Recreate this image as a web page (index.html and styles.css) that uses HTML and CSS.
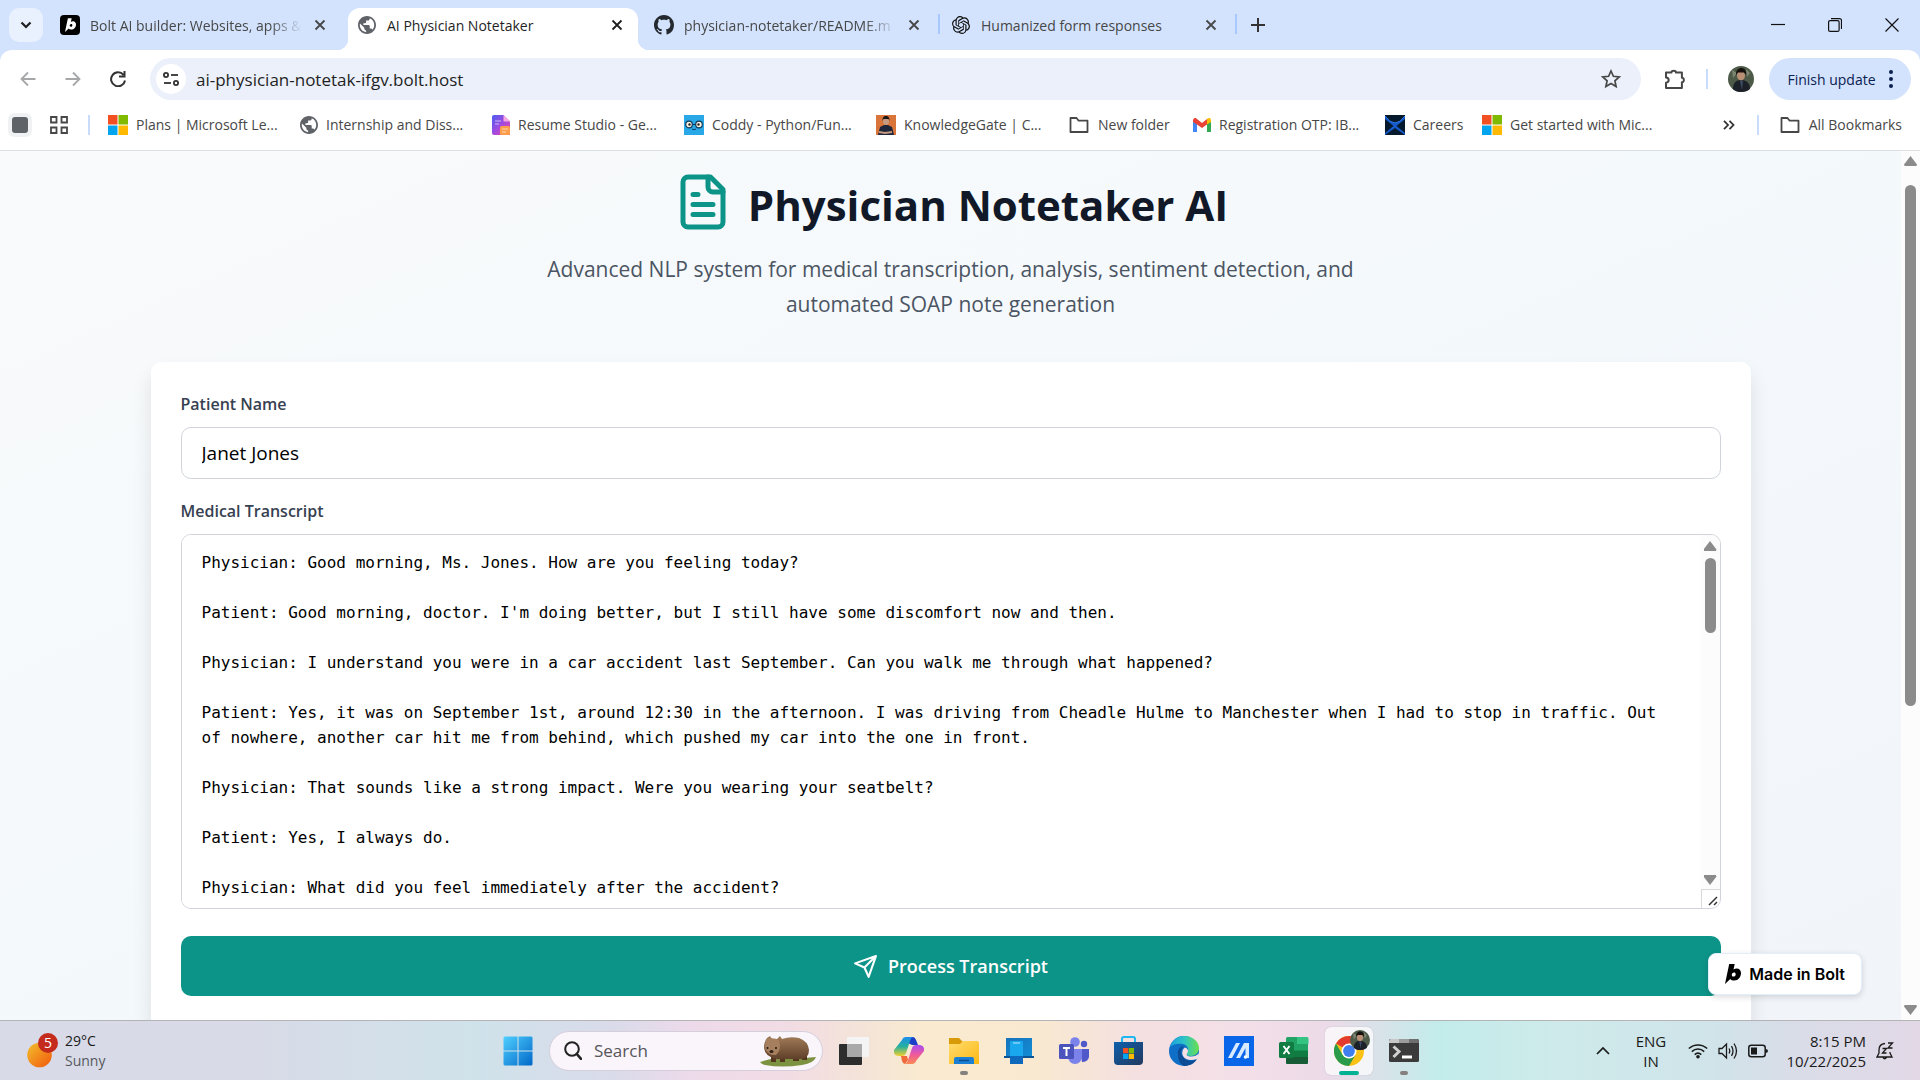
FILE: index.html
```html
<!DOCTYPE html>
<html lang="en">
<head>
<meta charset="utf-8">
<title>AI Physician Notetaker</title>
<link rel="stylesheet" href="styles.css">
</head>
<body>
<svg class="defs" aria-hidden="true">
  <defs>
    <linearGradient id="gWin" x1="0" y1="0" x2="1" y2="1"><stop offset="0" stop-color="#4fd0ff"/><stop offset="1" stop-color="#0067c8"/></linearGradient>
    <linearGradient id="gSun" x1="0" y1="0" x2="1" y2="1"><stop offset="0" stop-color="#f2c12e"/><stop offset="1" stop-color="#f2560a"/></linearGradient>
    <linearGradient id="gCopA" x1="0" y1="0" x2="0" y2="1"><stop offset="0" stop-color="#1a8df0"/><stop offset=".5" stop-color="#26b09c"/><stop offset="1" stop-color="#f2d02c"/></linearGradient>
    <linearGradient id="gCopB" x1="0" y1="0" x2="0" y2="1"><stop offset="0" stop-color="#a84df0"/><stop offset=".5" stop-color="#ee5a9c"/><stop offset="1" stop-color="#fb8a50"/></linearGradient>
    <linearGradient id="gFold" x1="0" y1="0" x2="1" y2="1"><stop offset="0" stop-color="#ffdc70"/><stop offset="1" stop-color="#fdb913"/></linearGradient>
    <linearGradient id="gBlue" x1="0" y1="0" x2="1" y2="1"><stop offset="0" stop-color="#1673bd"/><stop offset="1" stop-color="#128ed6"/></linearGradient>
    <linearGradient id="gStore" x1="0" y1="0" x2="1" y2="1"><stop offset="0" stop-color="#0f60ac"/><stop offset="1" stop-color="#22385f"/></linearGradient>
    <linearGradient id="gEdgeA" x1="0" y1="0" x2="1" y2="0"><stop offset="0" stop-color="#1c9fe0"/><stop offset=".5" stop-color="#2ec3c4"/><stop offset="1" stop-color="#6be04c"/></linearGradient>
    <linearGradient id="gRes" x1="0" y1="0" x2="1" y2="1"><stop offset="0" stop-color="#4a5cf0"/><stop offset=".5" stop-color="#a24be0"/><stop offset="1" stop-color="#f2469a"/></linearGradient>
    <linearGradient id="gFur" x1="0" y1="0" x2="0" y2="1"><stop offset="0" stop-color="#a27c59"/><stop offset="1" stop-color="#5f4029"/></linearGradient>
    <symbol id="globe" viewBox="2 2 20 20"><path fill="#5f6368" d="M12 2C6.480 2 2 6.480 2 12s4.480 10 10 10 10-4.480 10-10S17.520 2 12 2zm-1 17.930c-3.950-.49-7-3.850-7-7.930 0-.62.080-1.210.210-1.790L9 15v1c0 1.100.9 2 2 2v1.930zm6.900-2.540c-.26-.81-1-1.390-1.900-1.390h-1v-3c0-.55-.45-1-1-1H8v-2h2c.55 0 1-.45 1-1V7h2c1.100 0 2-.9 2-2v-.41c2.930 1.190 5 4.060 5 7.410 0 2.080-.8 3.970-2.100 5.390z"/></symbol>
    <symbol id="ms" viewBox="0 0 20 20"><path d="M0 0h9.500v9.500H0z" fill="#f25022"/><path d="M10.500 0H20v9.500h-9.500z" fill="#7fba00"/><path d="M0 10.500h9.500V20H0z" fill="#00a4ef"/><path d="M10.500 10.500H20V20h-9.500z" fill="#ffb900"/></symbol>
    <symbol id="folder" viewBox="0 0 20 20"><path d="M1.500 3h6l2.200 2.700h8.800v11.300h-17z" fill="none" stroke="#474747" stroke-width="1.800" stroke-linejoin="round"/></symbol>
    <symbol id="x" viewBox="0 0 12 12"><path d="M1.500 1.500l9 9M10.500 1.500l-9 9" fill="none" stroke="currentColor" stroke-width="1.800"/></symbol>
    <symbol id="bolt" viewBox="0 0 16 20"><path fill="currentColor" fill-rule="evenodd" d="M4.200 0h5.500L8.500 5.500c1-.8 2-1.100 3.200-1.100 2.600 0 4.300 1.900 4.300 4.700 0 4-2.800 7.500-6.700 7.500-1.800 0-3.200-.7-4-1.600L0 20zM9 8.600c-1.300 0-2.200 1.100-2.200 2.300 0 1 .7 1.700 1.600 1.700 1.300 0 2.300-1.100 2.300-2.400 0-.9-.7-1.600-1.700-1.600z"/></symbol>
    <symbol id="face" viewBox="0 0 26 26"><circle cx="13" cy="13" r="13" fill="#4e5a48"/><path d="M4 4l5 3-4 5zM18 3l4 4-3 4z" fill="#7d8672"/><path d="M5 23c0-6 3-9 8-9s9 3 9 9c-2 2-5 3-9 3s-6-1-8-3z" fill="#1c2028"/><ellipse cx="13" cy="9.500" rx="4" ry="5" fill="#b98f76"/><path d="M8 9c0-5 2-7 5.500-7S18.500 5 18 9l-2-2.500H10z" fill="#14110f"/><path d="M12 15h3l-1 9z" fill="#3b4a66"/></symbol>
  </defs>
</svg>

<header class="browser">
  <div class="tabstrip">
    <button class="tab-search" aria-label="Search tabs"><svg width="12" height="8" viewBox="0 0 12 8"><path d="M1.500 1.500L6 6l4.500-4.500" fill="none" stroke="#1f1f1f" stroke-width="2.200"/></svg></button>
    <div class="tabs">
      <div class="tab">
        <span class="fav fav-bolt"><svg width="11" height="14"><use href="#bolt"/></svg></span>
        <span class="tab-title fade">Bolt AI builder: Websites, apps &amp;</span>
        <button class="close" aria-label="Close tab"><svg width="12" height="12"><use href="#x"/></svg></button>
      </div>
      <div class="tab active">
        <span class="fav"><svg width="18" height="18"><use href="#globe"/></svg></span>
        <span class="tab-title">AI Physician Notetaker</span>
        <button class="close" aria-label="Close tab"><svg width="12" height="12"><use href="#x"/></svg></button>
      </div>
      <div class="tab ruled">
        <span class="fav"><svg width="20" height="20" viewBox="0 0 16 16"><path fill="#24292f" d="M8 0C3.580 0 0 3.580 0 8c0 3.540 2.290 6.530 5.470 7.590.4.070.55-.17.55-.38 0-.19-.01-.82-.01-1.490-2.010.37-2.530-.49-2.690-.94-.09-.23-.48-.94-.82-1.130-.28-.15-.68-.52-.01-.53.63-.01 1.080.58 1.230.82.72 1.210 1.870.87 2.330.66.070-.52.28-.87.51-1.070-1.780-.2-3.640-.89-3.640-3.950 0-.87.31-1.590.82-2.150-.08-.2-.36-1.020.08-2.120 0 0 .67-.21 2.200.82.640-.18 1.320-.27 2-.27s1.360.09 2 .27c1.530-1.040 2.200-.82 2.200-.82.440 1.100.16 1.920.08 2.120.51.56.82 1.270.82 2.150 0 3.070-1.870 3.750-3.650 3.950.29.25.54.73.54 1.480 0 1.070-.01 1.930-.01 2.200 0 .21.150.46.55.38A8.010 8.010 0 0 0 16 8c0-4.420-3.580-8-8-8z"/></svg></span>
        <span class="tab-title fade">physician-notetaker/README.m</span>
        <button class="close" aria-label="Close tab"><svg width="12" height="12"><use href="#x"/></svg></button>
      </div>
      <div class="tab ruled">
        <span class="fav"><svg width="18" height="18" viewBox="0 0 24 24"><path fill="#111" d="M22.280 9.820a5.980 5.980 0 0 0-.52-4.910 6.050 6.050 0 0 0-6.510-2.900A6.070 6.070 0 0 0 4.980 4.180a5.980 5.980 0 0 0-4 2.900 6.050 6.050 0 0 0 .74 7.100 5.980 5.980 0 0 0 .51 4.910 6.050 6.050 0 0 0 6.510 2.900A5.980 5.980 0 0 0 13.260 24a6.060 6.060 0 0 0 5.770-4.210 5.990 5.990 0 0 0 4-2.900 6.060 6.060 0 0 0-.75-7.070zm-9.020 12.610a4.480 4.480 0 0 1-2.880-1.040l.14-.08 4.780-2.760a.79.79 0 0 0 .39-.68v-6.740l2.020 1.170a.07.07 0 0 1 .04.05v5.580a4.500 4.500 0 0 1-4.490 4.500zM3.600 18.300a4.470 4.470 0 0 1-.53-3.010l.14.08 4.780 2.760a.77.77 0 0 0 .78 0l5.840-3.370v2.330a.08.08 0 0 1-.03.06l-4.830 2.790A4.500 4.500 0 0 1 3.600 18.300zM2.340 7.900a4.490 4.490 0 0 1 2.370-1.970v5.680a.77.77 0 0 0 .39.670l5.810 3.360-2.020 1.170a.08.08 0 0 1-.07 0l-4.830-2.790A4.500 4.500 0 0 1 2.340 7.870zm16.600 3.860L13.100 8.360l2.020-1.160a.08.08 0 0 1 .07 0l4.830 2.790a4.490 4.490 0 0 1-.68 8.100v-5.670a.79.79 0 0 0-.4-.670zm2.010-3.020l-.14-.09-4.770-2.780a.78.78 0 0 0-.79 0L9.410 9.230V6.900a.07.07 0 0 1 .03-.06l4.830-2.790a4.500 4.500 0 0 1 6.680 4.660zM8.310 12.860l-2.020-1.160a.08.08 0 0 1-.04-.06V6.070a4.500 4.500 0 0 1 7.380-3.450l-.14.08-4.780 2.760a.79.79 0 0 0-.39.680zm1.100-2.370l2.600-1.500 2.610 1.500v3l-2.600 1.500-2.610-1.500z"/></svg></span>
        <span class="tab-title">Humanized form responses</span>
        <button class="close" aria-label="Close tab"><svg width="12" height="12"><use href="#x"/></svg></button>
      </div>
    </div>
    <button class="new-tab" aria-label="New tab"><svg width="14" height="14" viewBox="0 0 14 14"><path d="M7 0v14M0 7h14" stroke="#333" stroke-width="2"/></svg></button>
    <div class="window-controls">
      <button aria-label="Minimize"><svg width="14" height="14" viewBox="0 0 14 14"><path d="M0 6.500h14" stroke="#111" stroke-width="1.200"/></svg></button>
      <button aria-label="Restore"><svg width="14" height="14" viewBox="0 0 14 14"><rect x=".6" y="2.600" width="10.500" height="10.800" rx="1.500" fill="none" stroke="#111" stroke-width="1.200"/><path d="M3 .6h8.500a2 2 0 0 1 2 2v8.500" fill="none" stroke="#111" stroke-width="1.200"/></svg></button>
      <button aria-label="Close"><svg width="14" height="14" viewBox="0 0 14 14"><path d="M.5.5l13 13M13.500.5l-13 13" stroke="#111" stroke-width="1.200"/></svg></button>
    </div>
  </div>

  <div class="toolbar">
    <div class="nav">
      <button aria-label="Back"><svg width="16" height="16" viewBox="0 0 16 16"><path d="M15.500 8H1.500M8 1.500L1.500 8 8 14.500" fill="none" stroke="#a5a7a9" stroke-width="1.800"/></svg></button>
      <button aria-label="Forward"><svg width="16" height="16" viewBox="0 0 16 16"><path d="M.5 8h14M8 1.500L14.500 8 8 14.500" fill="none" stroke="#a5a7a9" stroke-width="1.800"/></svg></button>
      <button aria-label="Reload"><svg width="16" height="16" viewBox="0 0 16 16"><path d="M13.500 3.800A7 7 0 1 0 15 9.500M14.500 0v5.500H9" fill="none" stroke="#333" stroke-width="2"/></svg></button>
    </div>
    <div class="omnibox">
      <button class="site-info" aria-label="Site information"><svg width="16" height="14" viewBox="0 0 16 14"><g fill="none" stroke="#333" stroke-width="1.800"><circle cx="3" cy="3" r="2.100"/><path d="M8 3h7"/><circle cx="13" cy="11" r="2.100"/><path d="M1 11h7"/></g></svg></button>
      <input class="url" type="text" value="ai-physician-notetak-ifgv.bolt.host" aria-label="Address">
      <button class="star" aria-label="Bookmark this tab"><svg width="20" height="20" viewBox="0 0 20 20"><path d="M10 2l2.400 5.300 5.800.6-4.300 3.900 1.200 5.700L10 14.600l-5.100 2.900 1.200-5.700L1.800 7.900l5.800-.6z" fill="none" stroke="#474747" stroke-width="1.700"/></svg></button>
    </div>
    <button class="ext" aria-label="Extensions"><svg width="22" height="22" viewBox="0 0 22 22"><path d="M2 4.500h5.500c-.3-2.400 4.700-2.400 4.400 0h6v5.300c2.600-.2 2.600 4.600 0 4.400V20H2v-5.200c3.600-.4 3.600-5 0-5.300z" fill="none" stroke="#474747" stroke-width="2" stroke-linejoin="round"/></svg></button>
    <span class="rule"></span>
    <button class="profile" aria-label="Profile"><svg width="26" height="26"><use href="#face"/></svg></button>
    <button class="update">Finish update<svg width="4" height="18" viewBox="0 0 4 18"><g fill="#0a2050"><circle cx="2" cy="2" r="2"/><circle cx="2" cy="9" r="2"/><circle cx="2" cy="16" r="2"/></g></svg></button>
  </div>

  <nav class="bookmarks" aria-label="Bookmarks">
    <button class="saved-group" aria-label="Saved tab group"><span></span></button>
    <button class="apps" aria-label="Tab groups"><svg width="18" height="18" viewBox="0 0 18 18"><g fill="none" stroke="#474747" stroke-width="1.800"><path d="M1 1h5.500v5.500H1zM11.500 1H17v5.500h-5.500zM1 11.500h5.500V17H1zM11.500 11.500H17V17h-5.500z"/></g></svg></button>
    <span class="rule"></span>
    <div class="marks">
      <a href="#"><svg width="20" height="20"><use href="#ms"/></svg>Plans | Microsoft Le...</a>
      <a href="#"><svg width="18" height="18"><use href="#globe"/></svg>Internship and Diss...</a>
      <a href="#"><svg width="18" height="20" viewBox="0 0 18 20"><path d="M2 0h9.500L18 6.500V20H2a2 2 0 0 1-2-2V2a2 2 0 0 1 2-2z" fill="url(#gRes)"/><path d="M11.500 0L18 6.500h-6.500z" fill="#f7a8e0"/><rect x="8" y="11" width="10" height="9" rx="1.500" fill="#ff9d4a"/><path d="M3 6h6M3 9h4M10 14h6M10 17h4" stroke="#fff" stroke-opacity=".6"/></svg>Resume Studio - Ge...</a>
      <a href="#"><svg width="20" height="20" viewBox="0 0 20 20"><path d="M0 0h20v20H0z" fill="#28a8e6"/><g fill="#fff7e4" stroke="#113a5c" stroke-width="1.200"><circle cx="5" cy="9.500" r="3.300"/><circle cx="15" cy="9.500" r="3.300"/></g><path d="M8.300 9.500h3.400M8 14q2 1.500 4 0" fill="none" stroke="#113a5c"/><circle cx="5.500" cy="9.500" r="1.200" fill="#222"/><circle cx="14.500" cy="9.500" r="1.200" fill="#222"/></svg>Coddy - Python/Fun...</a>
      <a href="#"><svg width="20" height="20" viewBox="0 0 20 20"><path d="M0 0h20v20H0z" fill="#d9743a"/><path d="M2 20l2-8 4-2h4l4 2 2 8z" fill="#20263a"/><ellipse cx="10" cy="6" rx="3" ry="4" fill="#c59a80"/><path d="M6.500 6c0-4 1.500-5 3.500-5s3.500 1 3.500 5l-1-2h-5z" fill="#181818"/><path d="M3 17l6 1 7-1" stroke="#c59a80" stroke-width="2" fill="none"/></svg>KnowledgeGate | C...</a>
      <a class="medium" href="#"><svg width="22" height="20"><use href="#folder"/></svg>New folder</a>
      <a href="#"><svg width="18" height="14" viewBox="0 0 18 14"><path d="M0 2v12h4V5z" fill="#4285f4"/><path d="M14 5v9h4V2z" fill="#34a853"/><path d="M0 2q1.500-3.500 4-1l5 4 5-4v5.500L9 10 4 6.500 0 4z" fill="#ea4335"/><path d="M14 1q3-2.500 4 1v2l-4 2.500z" fill="#fbbc04"/></svg>Registration OTP: IB...</a>
      <a class="short" href="#"><svg width="20" height="20" viewBox="0 0 20 20"><path d="M0 0h20v20H0z" fill="#061a2e"/><path d="M0 1q10 14 20 0v3L11.500 11 20 18v2L10 13 0 20v-2l8.500-7L0 4z" fill="#1558c8"/><path d="M0 1q10 14 20 0" fill="none" stroke="#2a7cf5"/></svg>Careers</a>
      <a href="#"><svg width="20" height="20"><use href="#ms"/></svg>Get started with Mic...</a>
    </div>
    <button class="more" aria-label="More bookmarks"><svg width="12" height="10" viewBox="0 0 12 10"><path d="M1 .8L5 5 1 9.200M6.500.8l4 4.200-4 4.200" fill="none" stroke="#333" stroke-width="1.800"/></svg></button>
    <span class="rule"></span>
    <a class="all" href="#"><svg width="22" height="20"><use href="#folder"/></svg>All Bookmarks</a>
  </nav>
</header>

<div class="viewport">
  <main class="page">
    <div class="container">
      <div class="hero">
        <div class="hero-title">
          <svg width="60" height="60" viewBox="0 0 24 24" fill="none" stroke="#0d9488" stroke-width="2" stroke-linecap="round" stroke-linejoin="round"><path d="M15 2H6a2 2 0 0 0-2 2v16a2 2 0 0 0 2 2h12a2 2 0 0 0 2-2V7Z"/><path d="M14 2v4a2 2 0 0 0 2 2h4M10 9H8M16 13H8M16 17H8"/></svg>
          <h1>Physician Notetaker AI</h1>
        </div>
        <p>Advanced NLP system for medical transcription, analysis, sentiment detection, and automated SOAP note generation</p>
      </div>
      <form class="card">
        <label for="patient">Patient Name</label>
        <input id="patient" class="field" type="text" value="Janet Jones">
        <label for="transcript">Medical Transcript</label>
        <div class="transcript">
          <textarea id="transcript">Physician: Good morning, Ms. Jones. How are you feeling today?

Patient: Good morning, doctor. I'm doing better, but I still have some discomfort now and then.

Physician: I understand you were in a car accident last September. Can you walk me through what happened?

Patient: Yes, it was on September 1st, around 12:30 in the afternoon. I was driving from Cheadle Hulme to Manchester when I had to stop in traffic. Out of nowhere, another car hit me from behind, which pushed my car into the one in front.

Physician: That sounds like a strong impact. Were you wearing your seatbelt?

Patient: Yes, I always do.

Physician: What did you feel immediately after the accident?</textarea>
          <div class="text-scroll" aria-hidden="true">
            <div class="scrollbar">
              <span class="arrow up"></span>
              <span class="track"><span class="thumb thumb-text"></span></span>
              <span class="arrow down"></span>
            </div>
            <span class="grip"><svg width="10" height="10" viewBox="0 0 10 10"><path d="M1 9l8-8M6 9l3-3" stroke="#333" stroke-width="1.500"/></svg></span>
          </div>
        </div>
        <button class="process" type="button"><svg width="25" height="25" viewBox="0 0 24 24" fill="none" stroke="#fff" stroke-width="2" stroke-linecap="round" stroke-linejoin="round"><path d="m22 2-7 20-4-9-9-4ZM22 2 11 13"/></svg>Process Transcript</button>
      </form>
    </div>
  </main>
  <div class="scrollbar page-scroll" aria-hidden="true">
    <span class="arrow up"></span>
    <span class="track"><span class="thumb thumb-page"></span></span>
    <span class="arrow down"></span>
  </div>
  <a class="made" href="#"><svg width="16" height="20"><use href="#bolt"/></svg>Made in Bolt</a>
</div>

<footer class="taskbar">
  <button class="weather">
    <svg width="32" height="36" viewBox="0 0 32 36"><circle cx="12.500" cy="22" r="12.300" fill="url(#gSun)"/><circle cx="21" cy="10" r="10" fill="#c42b1c"/><text class="count" x="21" y="15" text-anchor="middle">5</text></svg>
    <span class="stack"><span>29°C</span><span class="muted">Sunny</span></span>
  </button>
  <div class="dock">
    <button class="app" aria-label="Start"><svg width="30" height="30" viewBox="0 0 30 30"><path d="M.5 2a1.500 1.500 0 0 1 1.500-1.500h12.500v14H.5zM15.500.5H28A1.500 1.500 0 0 1 29.500 2v12.500h-14zM.5 15.500h14v14H2A1.500 1.500 0 0 1 .5 28zM15.500 15.500h14V28a1.500 1.500 0 0 1-1.500 1.500H15.500z" fill="url(#gWin)"/></svg></button>
    <label class="search">
      <svg width="18" height="19" viewBox="0 0 18 19"><circle cx="8" cy="8" r="6.800" fill="none" stroke="#222" stroke-width="2"/><path d="M12.800 13l4.200 4.800" stroke="#222" stroke-width="2.600" stroke-linecap="round"/></svg>
      <input type="text" placeholder="Search" aria-label="Search">
      <svg width="58" height="32" viewBox="0 0 58 32"><path d="M1 27q16-6 32-3l24-2q-2 6-14 8-20 3-37 0-4-1-5-3z" fill="#7c9240"/><path d="M12 21h5v6h-5zM21 21h5v6h-5zM34 20h6v6h-6zM43 19h5v6h-5z" fill="#55361f"/><path d="M8 3l3-2 2 3h5l3-3 2 3q8-3 17-1 9 3 10 12 0 8-8 9H18Q6 22 5 13 5 7 8 3z" fill="url(#gFur)"/><path d="M7 4q8-2 13 1 3 10-3 15-8 1-11-7z" fill="#a57f5e"/><circle cx="8.500" cy="13" r="1" fill="#1d140e"/><circle cx="17" cy="13" r="1" fill="#1d140e"/><ellipse cx="12.500" cy="16.500" rx="2" ry="1.500" fill="#2f2018"/></svg>
    </label>
    <button class="app" aria-label="Task view"><svg width="30" height="30" viewBox="0 0 30 30"><rect y="8" width="23" height="21" rx="1" fill="#2d2d2d"/><rect x="8" y="1" width="22" height="20" rx="1" fill="#f4f4f4"/><path d="M8 8h15v13H8z" fill="#a9a9a9"/></svg></button>
    <button class="app" aria-label="Copilot"><svg width="30" height="30" viewBox="0 0 30 30"><path d="M19 1q2 0 3 3l2 5h-6l-6-3 2-5z" fill="#1c3fc8"/><path d="M8 4q1-3 4-3h8q-3 0-4 4l-4 12q-1 3-4 3H4q-5-1-4-6z" fill="url(#gCopA)"/><path d="M22 25q-1 3-4 3h-8q3 0 4-4l4-12q1-3 4-3h4q5 1 4 6z" fill="url(#gCopB)"/><path d="M7 20h6l1 4-3 4q-2 0-3-3z" fill="#f06a3a"/></svg></button>
    <button class="app running" aria-label="File Explorer"><svg width="30" height="30" viewBox="0 0 30 30"><path d="M0 2h10l4 4h14v8H0z" fill="#d99a0a"/><path d="M0 8h11l3-3h14a2 2 0 0 1 2 2v21H0z" fill="url(#gFold)"/><path d="M5 28v-5a2 2 0 0 1 2-2h16a2 2 0 0 1 2 2v5z" fill="#1b7fd3"/><path d="M10 24.500h10" stroke="#0b4d92" stroke-width="1.500"/></svg></button>
    <button class="app" aria-label="Phone Link"><svg width="30" height="30" viewBox="0 0 30 30"><path d="M2 2h26v19H2z" fill="url(#gBlue)"/><path d="M0 20h30v2H0z" fill="#0b5596"/><rect x="6" y="5" width="13" height="23" rx="1" fill="#19a7ee"/><path d="M6 20h13v8H6z" fill="#0e68bb"/><path d="M9 7h7" stroke="#b8e8ff"/></svg></button>
    <button class="app" aria-label="Teams"><svg width="30" height="30" viewBox="0 0 30 30"><circle cx="16" cy="6" r="4.800" fill="#7b83eb"/><circle cx="25" cy="8" r="3.200" fill="#5059c9"/><path d="M21 13h9v8q-1 5-7 5z" fill="#5059c9"/><path d="M9 13h14v8q-1 7-7 7t-7-7z" fill="#7b83eb"/><rect y="8" width="15" height="15" rx="1.500" fill="#4b53bc"/><path d="M4 12h7M7.500 12v8" stroke="#fff" stroke-width="2"/></svg></button>
    <button class="app" aria-label="Microsoft Store"><svg width="30" height="30" viewBox="0 0 30 30"><path d="M8 6V3a2 2 0 0 1 2-2h9a2 2 0 0 1 2 2v3" fill="none" stroke="#1fb6f2" stroke-width="2"/><path d="M0 6h29v19a4 4 0 0 1-4 4H4a4 4 0 0 1-4-4z" fill="url(#gStore)"/><svg x="9" y="12" width="11" height="11" viewBox="0 0 20 20"><use href="#ms"/></svg></svg></button>
    <button class="app" aria-label="Edge"><svg width="30" height="30" viewBox="0 0 30 30"><circle cx="15" cy="15" r="15" fill="#0f6fc6"/><path d="M1 11C4 3 9 0 15 0c9 0 15 6 15 12 0 5-4 8-8 8-3 0-5-1-4-3 3-4 0-8-4-9-5-1-10 0-13 3z" fill="url(#gEdgeA)"/><path d="M9 19c-1-5 2-9 6-9-3 3-4 7-1 11 3 4 9 5 14 2-3 5-8 7-13 7-4-2-6-6-6-11z" fill="#0c4c94"/><path d="M16 11.500c3 1 4 4 2 6-1 2 1 3 4 3 3.500 0 6-1 7.500-3L30 20l-2 3c-6 2-12 1-14-3-1.500-3-.5-7 2-8.500z" fill="#f4dfe4"/></svg></button>
    <button class="app" aria-label="MyASUS"><svg width="30" height="30" viewBox="0 0 30 30"><path d="M0 0h30v30H0z" fill="#0a66e8"/><path d="M4 22L12 7h4L8 22zM12 22L20 7h5v15h-3.500V12L16 22z" fill="#d8eaff"/><circle cx="21.500" cy="21" r="1.800" fill="#fff"/></svg></button>
    <button class="app" aria-label="Excel"><svg width="30" height="30" viewBox="0 0 30 30"><rect x="7" y="1" width="22" height="27" rx="1.500" fill="#21a366"/><path d="M18 1h10a1.500 1.500 0 0 1 1.500 1.500V8H18z" fill="#33c481"/><path d="M7 14.500h11v7H7z" fill="#107c41"/><path d="M18 14.500h11v7H18z" fill="#107c41"/><path d="M7 21h22v5.500a1.500 1.500 0 0 1-1.500 1.500h-19A1.500 1.500 0 0 1 7 26.500z" fill="#185c37"/><rect y="6" width="15" height="16" rx="1.500" fill="#107c41"/><path d="M4.500 10l6 8M10.500 10l-6 8" stroke="#fff" stroke-width="2"/></svg></button>
    <button class="app current" aria-label="Chrome"><svg width="36" height="36" viewBox="0 0 36 36"><circle cx="15" cy="21" r="15" fill="#fbc116"/><path d="M15 21L2 13.500A15 15 0 0 1 28 13.500H15z" fill="#e33b2e"/><path d="M2 13.500a15 15 0 0 0 13 22.500l6.500-11.200L15 21l-6.500 3.800z" fill="#2a9a4b"/><circle cx="15" cy="21" r="7.500" fill="#fff"/><circle cx="15" cy="21" r="5.900" fill="#3f7ff0"/><svg x="16" y="0" width="20" height="20" viewBox="0 0 26 26"><use href="#face"/></svg></svg></button>
    <button class="app running" aria-label="Terminal"><svg width="30" height="30" viewBox="0 0 30 30"><rect y="3" width="30" height="23" rx="1.500" fill="#3b3b3b"/><path d="M1.500 3H10v4H0V4.500z" fill="#c8c8c8"/><path d="M10 3h10v4H10z" fill="#9c9c9c"/><path d="M20 3h8.500L30 4.500V7H20z" fill="#6e6e6e"/><path d="M4.500 10.500l5.500 5-5.500 5.500" fill="none" stroke="#cfcfcf" stroke-width="3"/><path d="M13 21h10" stroke="#fff" stroke-width="3"/></svg></button>
  </div>
  <div class="tray">
    <button aria-label="Show hidden icons"><svg width="14" height="9" viewBox="0 0 14 9"><path d="M1 8l6-6 6 6" fill="none" stroke="#1a1a1a" stroke-width="1.700"/></svg></button>
    <button class="stack lang"><span>ENG</span><span>IN</span></button>
    <button class="status" aria-label="Network, volume and battery">
      <svg width="20" height="16" viewBox="0 0 20 16"><g fill="none" stroke="#1a1a1a" stroke-width="1.500"><path d="M.8 5.500a13.500 13.500 0 0 1 18.400 0M3.800 8.600a9 9 0 0 1 12.400 0M6.700 11.600a5 5 0 0 1 6.600 0"/></g><circle cx="10" cy="13.800" r="1.800" fill="#1a1a1a"/></svg>
      <svg width="20" height="18" viewBox="0 0 20 18"><g fill="none" stroke="#1a1a1a" stroke-width="1.300"><path d="M1 6.500h3L8.500 2v14L4 11.500H1zM11 6.500q1.500 2.500 0 5M13.500 4.200q3 4.800 0 9.600M16 1.500q5 7.500 0 15"/></g></svg>
      <svg width="20" height="14" viewBox="0 0 20 14"><rect x=".8" y="1.300" width="16.400" height="11.400" rx="2.500" fill="none" stroke="#1a1a1a" stroke-width="1.500"/><rect x="3" y="3.500" width="6" height="7" fill="#1a1a1a"/><path d="M17.500 5q2.500 0 2.500 2t-2.500 2z" fill="#1a1a1a"/></svg>
    </button>
    <button class="stack clock"><span>8:15 PM</span><span>10/22/2025</span></button>
    <button aria-label="Notifications"><svg width="18" height="18" viewBox="0 0 18 18"><path d="M9 1.500Q3 2 3 8v3l-2 4h15l-2-4v-1M7 15.500q1.500 2.500 3.500 0M6.500 6.500h4l-4 4.500h4M12 1h4.500L12 6h4.500" fill="none" stroke="#1a1a1a" stroke-width="1.300"/></svg></button>
  </div>
</footer>
</body>
</html>
```
FILE: styles.css
```css
* { box-sizing: border-box; }

body {
  margin: 0;
  height: 100vh;
  display: flex;
  flex-direction: column;
  overflow: hidden;
  font-family: "Open Sans", "Noto Sans", sans-serif;
  color: #000;
}

button {
  margin: 0;
  padding: 0;
  border: 0;
  background: none;
  font: inherit;
  color: inherit;
  display: flex;
  align-items: center;
  justify-content: center;
}

a { color: inherit; text-decoration: none; }
input, textarea { font: inherit; color: inherit; outline: 0; }
svg { flex: none; display: block; }
.defs { position: absolute; width: 0; height: 0; }

/* Browser frame */
.browser { flex: none; background: #d3e3fd; font-size: 14px; }

.tabstrip { display: flex; align-items: center; height: 50px; }
.tab-search {
  width: 34px;
  height: 34px;
  margin-left: 9px;
  border-radius: 10px;
  background: #e9f1fe;
}
.tabs { display: flex; align-self: stretch; padding-left: 6px; }
.tab {
  position: relative;
  width: 297px;
  display: flex;
  align-items: center;
  padding: 0 20px 0 11px;
  color: #474747;
}
.tab.active { color: #1f1f1f; z-index: 1; }
.tab.active::before {
  content: "";
  position: absolute;
  z-index: -1;
  inset: 8px 5px 0 2px;
  border-radius: 12px 12px 0 0;
  background: #fff;
}
.tab.active::after {
  content: "";
  position: absolute;
  z-index: -2;
  inset: auto -7px 0 -10px;
  height: 12px;
  background:
    radial-gradient(circle at 0 0, transparent 12px, #fff 13px) left / 12px 12px no-repeat,
    radial-gradient(circle at 100% 0, transparent 12px, #fff 13px) right / 12px 12px no-repeat;
}
.tab.ruled::after {
  content: "";
  position: absolute;
  right: 0;
  top: 14px;
  width: 2px;
  height: 20px;
  background: #a8c7fa;
}
.fav { width: 20px; height: 20px; display: grid; place-items: center; }
.fav-bolt { border-radius: 4px; background: #000; color: #fff; }
.tab-title { flex: 1; margin: 0 12px 0 10px; white-space: nowrap; }
.fade {
  -webkit-mask-image: linear-gradient(to right, #000 85%, transparent);
  mask-image: linear-gradient(to right, #000 85%, transparent);
}
.close { width: 12px; height: 12px; }
.new-tab { margin-left: 14px; }
.window-controls { margin-left: auto; display: flex; }
.window-controls button { width: 57px; height: 48px; }

.toolbar {
  display: flex;
  align-items: center;
  height: 58px;
  padding: 0 9px 0 20px;
  border-radius: 12px 12px 0 0;
  background: #fff;
}
.nav { display: flex; gap: 29px; width: 130px; }
.omnibox {
  flex: 1;
  display: flex;
  align-items: center;
  height: 42px;
  padding: 0 20px 0 6px;
  border-radius: 21px;
  background: #ebf0fa;
}
.site-info { width: 30px; height: 30px; border-radius: 50%; background: #fff; }
.url { flex: 1; margin: 0 0 0 10px; padding: 0; border: 0; background: none; font-size: 17px; color: #1f1f1f; }
.ext { margin: 0 20px 0 23px; }
.rule { width: 2px; height: 20px; background: #c9dcfb; }
.profile { margin: 0 15px 0 20px; }
.update {
  gap: 13px;
  width: 142px;
  height: 42px;
  border-radius: 21px;
  background: #d3e3fd;
  color: #0a2050;
}

.bookmarks {
  display: flex;
  align-items: center;
  height: 43px;
  padding: 0 18px 9px 8px;
  border-bottom: 1px solid #dde0e3;
  background: #fff;
  color: #474747;
}
.bookmarks a { display: flex; align-items: center; gap: 8px; white-space: nowrap; }
.saved-group { width: 24px; height: 24px; border-radius: 6px; background: #eff1f3; }
.saved-group span { width: 16px; height: 16px; border-radius: 3px; background: #5f6368; }
.apps { margin: 0 20px 0 18px; }
.marks { flex: 1; display: flex; gap: 27px; padding-left: 18px; }
.marks a { width: 165px; }
.marks a.medium { width: 98px; }
.marks a.short { width: 70px; }
.more { margin-right: 22px; }
.bookmarks .all { margin-left: 20px; }

/* Scroll bars */
.scrollbar {
  width: 19px;
  padding: 6px 0 4px;
  display: flex;
  flex-direction: column;
  align-items: center;
  background: #fcfcfc;
}
.arrow { width: 13px; height: 10px; background: #8b8b8b; }
.up { clip-path: polygon(50% 0, 100% 85%, 95% 100%, 5% 100%, 0 85%); }
.down { clip-path: polygon(5% 0, 95% 0, 100% 15%, 50% 100%, 0 15%); }
.track { flex: 1; width: 11px; padding: 7px 0; }
.thumb { display: block; border-radius: 6px; background: #8b8b8b; }
.thumb-text { height: 75px; }
.thumb-page { height: 65%; }

/* Page */
.viewport { position: relative; flex: 1; min-height: 0; display: flex; overflow: hidden; }
.page { flex: 1; padding: 21px 20px 0; background: linear-gradient(to bottom right, #f9fafb, #f4f9fc 45%, #f1f5f9); }
.page-scroll { padding: 5px 0; }
.page-scroll .track { padding: 19px 0; }
.container { max-width: 1600px; margin: 0 auto; }
.hero { margin-bottom: 40px; text-align: center; color: #4b5563; }
.hero-title { display: flex; align-items: flex-end; justify-content: center; gap: 15px; margin-bottom: 20px; }
.hero h1 { margin: 0; font-size: 42px; line-height: 55px; font-weight: 700; color: #111827; }
.hero p { max-width: 840px; margin: 0 auto; font-size: 21px; line-height: 35px; }

.card {
  padding: 30px;
  border-radius: 10px;
  background: #fff;
  box-shadow: 0 12px 20px rgba(0, 0, 0, .1);
}
.card label { display: block; margin-bottom: 10px; font-size: 16px; line-height: 25px; font-weight: 600; color: #374151; }
.field {
  display: block;
  width: 100%;
  height: 52px;
  margin-bottom: 20px;
  padding: 0 20px;
  border: 1px solid #d1d5db;
  border-radius: 10px;
  background: #fff;
  font-size: 19px;
}
.transcript {
  display: flex;
  height: 375px;
  margin-bottom: 27px;
  border: 1px solid #d1d5db;
  border-radius: 10px;
  overflow: hidden;
}
.transcript textarea {
  flex: 1;
  margin: 0;
  padding: 15px 20px;
  border: 0;
  resize: none;
  overflow: hidden;
  font: 16px/25px "DejaVu Sans Mono", monospace;
}
.text-scroll { display: flex; flex-direction: column; }
.text-scroll .scrollbar { flex: 1; }
.grip {
  display: grid;
  place-items: end;
  width: 19px;
  height: 19px;
  padding: 0 2px 2px 0;
  border: solid #d9d9d9;
  border-width: 1px 0 0 1px;
}
.process {
  width: 100%;
  height: 60px;
  margin-bottom: 30px;
  gap: 10px;
  border-radius: 10px;
  background: #0d9488;
  color: #fff;
  font-size: 18px;
  font-weight: 600;
}
.made {
  position: absolute;
  right: 58px;
  bottom: 25px;
  display: flex;
  align-items: center;
  gap: 8px;
  height: 42px;
  padding: 0 16px;
  border: 1px solid #e2eefb;
  border-radius: 8px;
  background: #fff;
  box-shadow: 0 2px 6px rgba(0, 0, 0, .15);
  font: 600 16px/20px Inter, sans-serif;
}

/* Taskbar */
.taskbar {
  flex: none;
  display: grid;
  grid-template-columns: 1fr auto 1fr;
  align-items: center;
  height: 60px;
  border-top: 1px solid #b4b4b8;
  background: linear-gradient(to right, #d8dbe7 0 13%, #cfe2ea 25%, #dadbea 32%, #eddaea 36%, #f2dce4 41%, #f4e4d8 45%, #f9ead0 48%, #f9e9d0 54%, #f4e0e0 59%, #f3dfe8 65%, #ecdae8 69%, #c2ecea 75%, #ceeaea 81%, #d0e4ea 89%, #d8dde8 93%, #e2d8e6);
  font-size: 14px;
  color: #1a1a1a;
}
.stack { display: flex; flex-direction: column; line-height: 20px; }
.muted { color: #55585e; }
.weather { justify-self: start; margin-left: 27px; gap: 6px; }
.weather .stack { align-items: flex-start; }
.count { font-size: 14px; fill: #fff; }
.dock { display: flex; align-items: center; gap: 7px; padding-left: 2px; }
.app { position: relative; width: 48px; height: 48px; border-radius: 6px; }
.app.current { padding: 0 0 6px 6px; background: rgba(255, 255, 255, .7); box-shadow: 0 0 1px rgba(0, 0, 0, .3); }
.running::after, .current::after {
  content: "";
  position: absolute;
  bottom: 0;
  width: 8px;
  height: 4px;
  border-radius: 2px;
  background: #85817e;
}
.current::after { left: 14px; width: 20px; background: #00b294; }
.search {
  display: flex;
  align-items: center;
  width: 274px;
  height: 40px;
  padding: 0 5px 0 14px;
  border: 1px solid #d5cfdc;
  border-radius: 20px;
  background: #f9f5fa;
}
.search input { flex: 1; min-width: 0; margin-left: 12px; padding: 0; border: 0; background: none; font-size: 17px; }
.search input::placeholder { color: #55555a; opacity: 1; }
.tray { justify-self: end; display: flex; align-items: center; padding-right: 26px; font-size: 15px; }
.lang { width: 54px; margin: 0 10px 0 14px; }
.status { gap: 10px; }
.clock { align-items: flex-end; width: 98px; margin-right: 10px; }
```
